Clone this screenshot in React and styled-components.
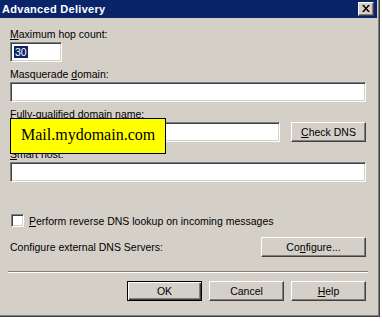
import React from "react";
import styled, { createGlobalStyle } from "styled-components";

const GlobalStyle = createGlobalStyle`
  html, body {
    margin: 0;
    padding: 0;
    background: #ffffff;
  }
  body {
    font-family: "Liberation Sans", Arial, sans-serif;
    font-size: 10.5px;
    color: #000;
  }
`;

export default function App() {
  return (
    <>
      <GlobalStyle />
      <Window>
        <TitleBar>
          <Title>Advanced Delivery</Title>
          <CloseButton aria-label="Close">
            <svg width="8" height="7" viewBox="0 0 8 7">
              <path d="M0 0h2l2 2.5L6 0h2L5 3.5 8 7H6L4 4.5 2 7H0l3-3.5z" fill="#000" />
            </svg>
          </CloseButton>
        </TitleBar>
        <Body>
          <Group>
            <Label>
              <u>M</u>aximum hop count:
            </Label>
            <Input width="52px">
              <Selected>30</Selected>
            </Input>
          </Group>
          <Group>
            <Label>
              Masquerade <u>d</u>omain:
            </Label>
            <Input />
          </Group>
          <Group>
            <Label>
              <u>F</u>ully-qualified domain name:
            </Label>
            <Row>
              <Input width="270px" />
              <Button width="75px">
                <u>C</u>heck DNS
              </Button>
            </Row>
          </Group>
          <Group>
            <Label>
              <u>S</u>mart host:
            </Label>
            <Input />
          </Group>
          <CheckRow>
            <Checkbox />
            <span>
              <u>P</u>erform reverse DNS lookup on incoming messages
            </span>
          </CheckRow>
          <ConfigRow>
            <span>Configure external DNS Servers:</span>
            <Button width="105px">
              Co<u>n</u>figure...
            </Button>
          </ConfigRow>
          <Separator />
          <Footer>
            <Button width="75px" $default>
              OK
            </Button>
            <Button width="75px">Cancel</Button>
            <Button width="75px">
              <u>H</u>elp
            </Button>
          </Footer>
          <Callout>Mail.mydomain.com</Callout>
        </Body>
      </Window>
    </>
  );
}

const Window = styled.div`
  width: 380px;
  height: 317px;
  box-sizing: border-box;
  background: #d4d0c8;
  border-right: 1px solid #404040;
  border-bottom: 1px solid #404040;
  box-shadow: inset -1px -1px 0 #808080;
  display: flex;
  flex-direction: column;
`;

const TitleBar = styled.div`
  height: 18px;
  margin-right: 2px;
  background: #0a246a;
  display: flex;
  align-items: center;
  justify-content: space-between;
  padding: 0 3px 0 2px;
`;

const Title = styled.span`
  color: #fff;
  font-weight: bold;
  font-size: 11px;
  letter-spacing: 0.3px;
`;

const CloseButton = styled.div`
  width: 16px;
  height: 14px;
  box-sizing: border-box;
  background: #d4d0c8;
  border-top: 1px solid #fff;
  border-left: 1px solid #fff;
  border-right: 1px solid #404040;
  border-bottom: 1px solid #404040;
  box-shadow: inset -1px -1px 0 #808080;
  display: flex;
  align-items: center;
  justify-content: center;
  padding-bottom: 1px;
`;

const Body = styled.div`
  position: relative;
  flex: 1;
  padding: 10px 13px 0 10px;
  display: flex;
  flex-direction: column;
`;

const Group = styled.div`
  display: flex;
  flex-direction: column;
  margin-bottom: 6px;
`;

const Label = styled.div`
  height: 13px;
  line-height: 13px;
  margin-bottom: 1px;
  white-space: nowrap;
`;

const Input = styled.div`
  width: ${(p) => p.width || "100%"};
  height: 20px;
  box-sizing: border-box;
  background: #fff;
  border-top: 1px solid #808080;
  border-left: 1px solid #808080;
  border-right: 1px solid #fff;
  border-bottom: 1px solid #fff;
  box-shadow: inset 1px 1px 0 #404040, inset -1px -1px 0 #d4d0c8;
  padding: 3px 3px;
  line-height: 13px;
`;

const Selected = styled.span`
  background: #0a246a;
  color: #fff;
  padding: 0 1px;
`;

const Row = styled.div`
  display: flex;
  align-items: center;
  justify-content: space-between;
  height: 20px;
`;

const Button = styled.div`
  width: ${(p) => p.width};
  height: 20px;
  box-sizing: border-box;
  background: #d4d0c8;
  display: flex;
  align-items: center;
  justify-content: center;
  border-top: 1px solid ${(p) => (p.$default ? "#000" : "#fff")};
  border-left: 1px solid ${(p) => (p.$default ? "#000" : "#fff")};
  border-right: 1px solid #404040;
  border-bottom: 1px solid #404040;
  box-shadow: ${(p) =>
    p.$default
      ? "inset 1px 1px 0 #fff, inset -1px -1px 0 #404040, inset -2px -2px 0 #808080"
      : "inset -1px -1px 0 #808080"};
  ${(p) => p.$default && "border-color: #000;"}
`;

const CheckRow = styled.div`
  display: flex;
  align-items: center;
  gap: 5px;
  margin: 26px 0 0 1px;
  height: 13px;
`;

const Checkbox = styled.div`
  width: 13px;
  height: 13px;
  box-sizing: border-box;
  background: #fff;
  border-top: 1px solid #808080;
  border-left: 1px solid #808080;
  border-right: 1px solid #fff;
  border-bottom: 1px solid #fff;
  box-shadow: inset 1px 1px 0 #404040, inset -1px -1px 0 #d4d0c8;
`;

const ConfigRow = styled.div`
  display: flex;
  align-items: center;
  justify-content: space-between;
  margin-top: 10px;
`;

const Separator = styled.div`
  margin: 14px -2px 0 -2px;
  height: 0;
  border-top: 1px solid #808080;
  border-bottom: 1px solid #fff;
`;

const Footer = styled.div`
  display: flex;
  justify-content: flex-end;
  gap: 7px;
  margin-top: 8px;
`;

const Callout = styled.div`
  position: absolute;
  left: 10px;
  top: 100px;
  width: 156px;
  height: 36px;
  box-sizing: border-box;
  background: #ffff00;
  border: 1px solid #000;
  font-family: "Liberation Serif", "Times New Roman", serif;
  font-size: 16px;
  padding: 7px 0 0 10px;
  line-height: 18px;
  white-space: nowrap;
`;
